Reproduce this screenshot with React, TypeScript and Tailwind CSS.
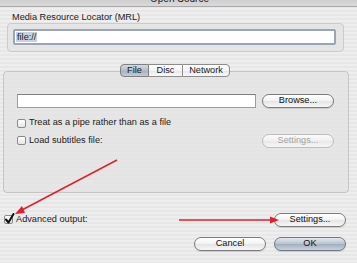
import React from "react";

const stripes =
  "bg-[repeating-linear-gradient(to_bottom,#eeeeee_0px,#eeeeee_2px,#e7e7e7_2px,#e7e7e7_4px)]";

function AquaButton({
  children,
  disabled,
  def,
  className = "",
}: {
  children: React.ReactNode;
  disabled?: boolean;
  def?: boolean;
  className?: string;
}) {
  const base =
    "flex items-center justify-center rounded-full h-[14px] w-[72px] leading-none border shadow-[0_1px_1px_rgba(0,0,0,0.12)] ";
  if (def)
    return (
      <div
        className={
          base +
          "border-[#6c7886] bg-[linear-gradient(to_bottom,#e3e8ee_0%,#b9c3cf_48%,#a3afbe_52%,#c9d2dc_100%)] text-[#111] " +
          className
        }
      >
        {children}
      </div>
    );
  if (disabled)
    return (
      <div
        className={
          base +
          "border-[#bdbdbd] bg-[linear-gradient(to_bottom,#fbfbfb_0%,#f0f0f0_50%,#e9e9e9_52%,#f6f6f6_100%)] text-[#a4a4a4] shadow-none " +
          className
        }
      >
        {children}
      </div>
    );
  return (
    <div
      className={
        base +
        "border-[#7b7b7b] bg-[linear-gradient(to_bottom,#ffffff_0%,#f3f3f3_48%,#e4e4e4_52%,#f8f8f8_100%)] text-[#111] " +
        className
      }
    >
      {children}
    </div>
  );
}

function Checkbox({ checked }: { checked?: boolean }) {
  return (
    <div className="relative w-[9px] h-[9px] rounded-[2px] border border-[#8a8a8a] bg-[linear-gradient(to_bottom,#ffffff,#e6e6e6)] shrink-0">
      {checked && (
        <svg
          className="absolute left-[-1px] top-[-3px]"
          width="11"
          height="12"
          viewBox="0 0 11 12"
        >
          <path
            d="M2 6.5 L4.5 9.5 L9.5 1"
            fill="none"
            stroke="#111"
            strokeWidth="2"
            strokeLinecap="round"
            strokeLinejoin="round"
          />
        </svg>
      )}
    </div>
  );
}

export default function App() {
  return (
    <div
      className={
        "relative w-[357px] h-[263px] overflow-hidden font-['Liberation_Sans',Arial,sans-serif] text-[9.2px] text-[#1a1a1a] " +
        stripes
      }
    >
      {/* title bar */}
      <div className="h-[7px] overflow-hidden border-b border-[#a8a8a8] bg-[linear-gradient(to_bottom,#cfcfcf,#dadada)]">
        <div className="-mt-[6px] ml-[2px] text-center text-[10px] leading-[10px] text-[#222]">
          Open Source
        </div>
      </div>

      {/* MRL label */}
      <div className="mt-[5px] pl-[12px] leading-[11px]">
        Media Resource Locator (MRL)
      </div>

      {/* MRL group box */}
      <div className="ml-[7px] w-[337px] h-[29px] rounded-[4px] border border-[#cbcbcb] bg-[#e4e4e4]/80 pt-[5px] pl-[5px]">
        <div className="w-[323px] h-[16px] border-2 border-[#9aa6b5] rounded-[2px] bg-white flex items-center pl-[1px]">
          <span className="bg-[#c6d3e2] px-[1px] leading-[10px]">file://</span>
        </div>
      </div>

      {/* tabs */}
      <div className="relative z-10 mt-[12px] ml-[120px] flex h-[13px]">
        <div className="w-[29px] flex items-center justify-center border border-[#7f7f7f] rounded-l-[4px] bg-[linear-gradient(to_bottom,#d3dae3_0%,#b3bdca_50%,#a6b1bf_52%,#c3ccd6_100%)]">
          File
        </div>
        <div className="w-[33px] flex items-center justify-center border-y border-[#8c8c8c] bg-[linear-gradient(to_bottom,#ffffff_0%,#f4f4f4_50%,#e8e8e8_52%,#f9f9f9_100%)]">
          Disc
        </div>
        <div className="w-[48px] flex items-center justify-center border border-[#8c8c8c] rounded-r-[4px] bg-[linear-gradient(to_bottom,#ffffff_0%,#f4f4f4_50%,#e8e8e8_52%,#f9f9f9_100%)]">
          Network
        </div>
      </div>

      {/* tab box */}
      <div className="-mt-[6px] ml-[3px] w-[346px] h-[122px] rounded-[4px] border border-[#c4c4c4] bg-[#e3e3e3]/80 pl-[13px] pr-[14px] pt-[22px]">
        <div className="flex items-center justify-between h-[14px]">
          <div className="w-[239px] h-[14px] bg-white border border-[#9d9d9d] border-t-[#7e7e7e]" />
          <AquaButton>Browse...</AquaButton>
        </div>
        <div className="mt-[10px] flex items-center h-[10px]">
          <Checkbox />
          <span className="ml-[3px]">Treat as a pipe rather than as a file</span>
        </div>
        <div className="mt-[6px] flex items-center justify-between h-[13px]">
          <div className="flex items-center">
            <Checkbox />
            <span className="ml-[3px]">Load subtitles file:</span>
          </div>
          <AquaButton disabled>Settings...</AquaButton>
        </div>
      </div>

      {/* advanced output */}
      <div className="mt-[20px] flex items-center justify-between h-[14px] pl-[4px] pr-[11px]">
        <div className="flex items-center">
          <Checkbox checked />
          <span className="ml-[3px]">Advanced output:</span>
        </div>
        <AquaButton>Settings...</AquaButton>
      </div>

      {/* cancel / ok */}
      <div className="mt-[10px] flex justify-end gap-[8px] pr-[11px]">
        <AquaButton>Cancel</AquaButton>
        <AquaButton def>OK</AquaButton>
      </div>

      {/* red annotation arrows */}
      <svg
        className="absolute inset-0 pointer-events-none"
        width="357"
        height="263"
        viewBox="0 0 357 263"
      >
        <line x1="117" y1="160" x2="20" y2="211" stroke="#e0202c" strokeWidth="1.5" />
        <polygon points="15,214 22,206 25,213" fill="#e0202c" />
        <line x1="179" y1="220" x2="272" y2="220" stroke="#e0202c" strokeWidth="1.3" />
        <polygon points="279,220 270,216.5 270,223.5" fill="#e0202c" />
      </svg>
    </div>
  );
}
